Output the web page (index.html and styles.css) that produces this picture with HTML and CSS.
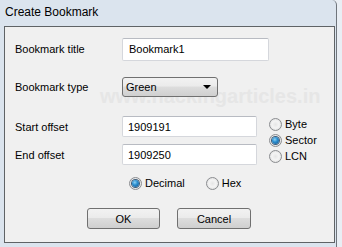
FILE: index.html
```html
<!DOCTYPE html>
<html>
<head>
<meta charset="utf-8">
<link rel="stylesheet" href="styles.css">
</head>
<body>
<div class="window">
  <div class="titlebar">Create Bookmark</div>
  <div class="panel">
    <div class="watermark">www.hackingarticles.in</div>
    <div class="row row-title">
      <span class="label">Bookmark title</span>
      <div class="input wide">Bookmark1</div>
    </div>
    <div class="row row-type">
      <span class="label">Bookmark type</span>
      <div class="select"><span>Green</span><span class="arrow"></span></div>
    </div>
    <div class="offsets">
      <div class="offset-fields">
        <div class="row row-offset">
          <span class="label">Start offset</span>
          <div class="input narrow">1909191</div>
        </div>
        <div class="row row-offset second">
          <span class="label">End offset</span>
          <div class="input narrow">1909250</div>
        </div>
      </div>
      <div class="unit-group">
        <div class="radio-item"><span class="radio"></span><span>Byte</span></div>
        <div class="radio-item"><span class="radio checked"></span><span>Sector</span></div>
        <div class="radio-item"><span class="radio"></span><span>LCN</span></div>
      </div>
    </div>
    <div class="base-row">
      <div class="radio-item"><span class="radio checked"></span><span>Decimal</span></div>
      <div class="radio-item hex"><span class="radio"></span><span>Hex</span></div>
    </div>
    <div class="buttons">
      <div class="button ok">OK</div>
      <div class="button cancel">Cancel</div>
    </div>
  </div>
</div>
</body>
</html>
```

FILE: styles.css
```css
html, body {
  margin: 0;
  padding: 0;
  background: #e9eef4;
}
body {
  font-family: "Liberation Sans", Arial, sans-serif;
  font-size: 11px;
  color: #000;
}
.window {
  width: 337px;
  height: 247px;
  background: #dbe4ee;
  border-right: 1px solid #6f757c;
  border-top-right-radius: 5px;
  box-sizing: border-box;
  display: flex;
  flex-direction: column;
}
.titlebar {
  height: 26px;
  box-sizing: border-box;
  padding: 5px 0 0 5px;
  font-size: 12px;
  line-height: 15px;
  color: #000;
}
.panel {
  position: relative;
  margin-left: 4px;
  width: 331px;
  height: 217px;
  box-sizing: border-box;
  border: 1px solid #5f6366;
  background: #f0f0f0;
  padding-left: 10px;
  overflow: hidden;
}
.watermark {
  position: absolute;
  left: 95px;
  top: 58px;
  font-size: 20px;
  font-weight: bold;
  color: #e6e6e6;
  white-space: nowrap;
  letter-spacing: 0;
}
.row {
  position: relative;
  display: flex;
  align-items: center;
}
.label {
  width: 107px;
  flex: none;
}
.row-title {
  margin-top: 11px;
  height: 22px;
}
.row-type {
  margin-top: 17px;
  height: 20px;
}
.input {
  box-sizing: border-box;
  background: #fff;
  border: 1px solid #d5d7dc;
  border-top-color: #b8bbc2;
  border-radius: 2px;
  padding-left: 6px;
  display: flex;
  align-items: center;
}
.input.wide {
  width: 147px;
  height: 23px;
}
.input.narrow {
  width: 135px;
  height: 21px;
  padding-left: 5px;
}
.select {
  box-sizing: border-box;
  width: 96px;
  height: 20px;
  border: 1px solid #707070;
  border-radius: 3px;
  background: linear-gradient(#f2f2f2 0%, #ebebeb 45%, #dddddd 50%, #cfcfcf 100%);
  display: flex;
  align-items: center;
  justify-content: space-between;
  padding: 0 6px 0 3px;
}
.arrow {
  width: 0;
  height: 0;
  border-left: 4px solid transparent;
  border-right: 4px solid transparent;
  border-top: 4px solid #000;
}
.offsets {
  position: relative;
  margin-top: 19px;
  display: flex;
}
.row-offset {
  height: 21px;
}
.row-offset.second {
  margin-top: 7px;
}
.unit-group {
  margin-left: 12px;
  display: flex;
  flex-direction: column;
}
.radio-item {
  position: relative;
  display: flex;
  align-items: center;
  height: 16px;
}
.radio {
  width: 13px;
  height: 13px;
  box-sizing: border-box;
  border-radius: 50%;
  border: 1px solid #8b8d90;
  background: radial-gradient(circle at 50% 50%, #e6e6e6 0%, #f4f4f4 45%, #d4d4d4 100%);
  margin-right: 3px;
  flex: none;
  display: flex;
  align-items: center;
  justify-content: center;
}
.radio.checked::after {
  content: "";
  width: 7px;
  height: 7px;
  border-radius: 50%;
  background: radial-gradient(circle at 40% 35%, #8fd3f5 0%, #2c8fd0 40%, #0f4f86 100%);
  box-shadow: 0 0 0 1px #3d5b78;
}
.base-row {
  position: relative;
  margin-top: 10px;
  display: flex;
  padding-left: 114px;
}
.base-row .radio-item.hex {
  margin-left: 21px;
}
.buttons {
  position: relative;
  margin-top: 17px;
  display: flex;
  padding-left: 72px;
}
.button {
  box-sizing: border-box;
  height: 21px;
  border: 1px solid #707070;
  border-radius: 3px;
  background: linear-gradient(#f2f2f2 0%, #ebebeb 45%, #dddddd 50%, #cfcfcf 100%);
  display: flex;
  align-items: center;
  justify-content: center;
}
.button.ok {
  width: 73px;
}
.button.cancel {
  width: 74px;
  margin-left: 17px;
}
```
